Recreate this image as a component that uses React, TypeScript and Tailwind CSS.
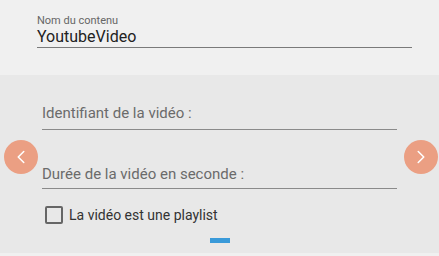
import { ChevronLeft, ChevronRight } from "lucide-react";

const Field = ({ label, className = "" }: { label: string; className?: string }) => (
  <div className={`border-b border-[#8a8a8a] ${className}`}>
    <span className="block text-[15px] leading-[20px] text-[#6b6b6b]">{label}</span>
  </div>
);

const NavButton = ({ side }: { side: "left" | "right" }) => (
  <button
    className={`absolute top-[65px] flex h-[34px] w-[34px] items-center justify-center rounded-full bg-[#eb9f83] text-white ${
      side === "left" ? "left-[4px]" : "right-[1px]"
    }`}
  >
    {side === "left" ? (
      <ChevronLeft size={22} strokeWidth={1.7} />
    ) : (
      <ChevronRight size={22} strokeWidth={1.7} />
    )}
  </button>
);

export default function App() {
  return (
    <div className="w-[439px] h-[256px] overflow-hidden bg-[#f0f0f0] font-['Roboto',sans-serif]">
      <div className="h-[75px] px-[37px] pt-[14px] bg-[#f0f0f0]">
        <div className="w-[375px] border-b border-[#7a7a7a]">
          <span className="block text-[11px] leading-[13px] text-[#666]">Nom du contenu</span>
          <span className="block text-[16px] leading-[20px] text-[#222]">YoutubeVideo</span>
        </div>
      </div>
      <div className="relative h-[178px] bg-[#e8e8e8]">
        <NavButton side="left" />
        <NavButton side="right" />
        <div className="mx-[42px] pt-[28px]">
          <Field label="Identifiant de la vidéo :" className="pb-[6px]" />
          <Field label="Durée de la vidéo en seconde :" className="mt-[34px] pb-[4px]" />
          <label className="mt-[17px] ml-[3px] flex items-center gap-[6px]">
            <span className="h-[18px] w-[18px] rounded-[2px] border-2 border-[#666]" />
            <span className="text-[14px] leading-[18px] text-[#333]">La vidéo est une playlist</span>
          </label>
          <div className="mt-[14px] mx-auto h-[5px] w-[20px] bg-[#3a9ad9]" />
        </div>
      </div>
    </div>
  );
}
